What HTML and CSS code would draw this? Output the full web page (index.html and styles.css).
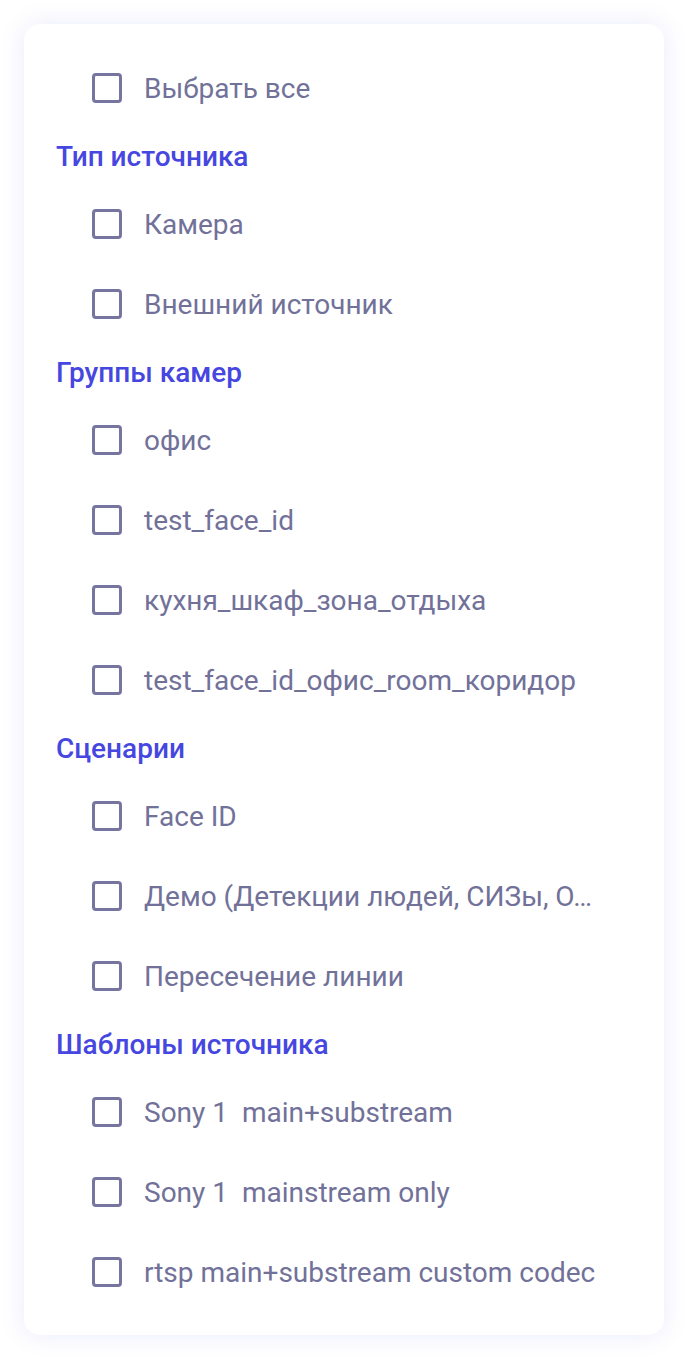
FILE: index.html
```html
<!DOCTYPE html>
<html lang="ru">
<head>
  <meta charset="UTF-8" />
  <meta name="viewport" content="width=device-width, initial-scale=1.0" />
  <title>Фильтр источников</title>
  <link rel="stylesheet" href="styles.css">
</head>
<body>
  <div class="filter-card">
    <label class="option"><span class="box"></span><span class="label">Выбрать все</span></label>

    <div class="group-title">Тип источника</div>
    <label class="option"><span class="box"></span><span class="label">Камера</span></label>
    <label class="option"><span class="box"></span><span class="label">Внешний источник</span></label>

    <div class="group-title">Группы камер</div>
    <label class="option"><span class="box"></span><span class="label">офис</span></label>
    <label class="option"><span class="box"></span><span class="label">test_face_id</span></label>
    <label class="option"><span class="box"></span><span class="label">кухня_шкаф_зона_отдыха</span></label>
    <label class="option"><span class="box"></span><span class="label">test_face_id_офис_room_коридор</span></label>

    <div class="group-title">Сценарии</div>
    <label class="option"><span class="box"></span><span class="label">Face ID</span></label>
    <label class="option"><span class="box"></span><span class="label" title="Демо (Детекции людей, СИЗы, Огонь и дым)">Демо (Детекции людей, СИЗы, О…</span></label>
    <label class="option"><span class="box"></span><span class="label">Пересечение линии</span></label>

    <div class="group-title">Шаблоны источника</div>
    <label class="option"><span class="box"></span><span class="label">Sony 1&nbsp; main+substream</span></label>
    <label class="option"><span class="box"></span><span class="label">Sony 1&nbsp; mainstream only</span></label>
    <label class="option"><span class="box"></span><span class="label">rtsp main+substream custom codec</span></label>
  </div>
</body>
</html>
```

FILE: styles.css
```css
* {
  box-sizing: border-box;
}

body {
  font-family: Roboto, 'Noto Sans', sans-serif;
  margin: 0;
  padding: 24px;
  background: #fff;
}

.filter-card {
  background: white;
  width: 640px;
  padding: 24px 32px 23px 32px;
  border-radius: 16px;
  box-shadow: 0 0 24px rgba(96, 96, 235, 0.13);
}

.group-title {
  height: 56px;
  display: flex;
  align-items: center;
  font-size: 28px;
  font-weight: 500;
  color: #4646e0;
}

.option {
  height: 80px;
  display: flex;
  align-items: center;
  padding-left: 36px;
  cursor: pointer;
}

.box {
  flex: none;
  width: 30px;
  height: 30px;
  border: 3px solid #75759f;
  border-radius: 4px;
  margin-right: 22px;
}

.label {
  font-size: 28px;
  color: #717199;
  white-space: nowrap;
}
```
